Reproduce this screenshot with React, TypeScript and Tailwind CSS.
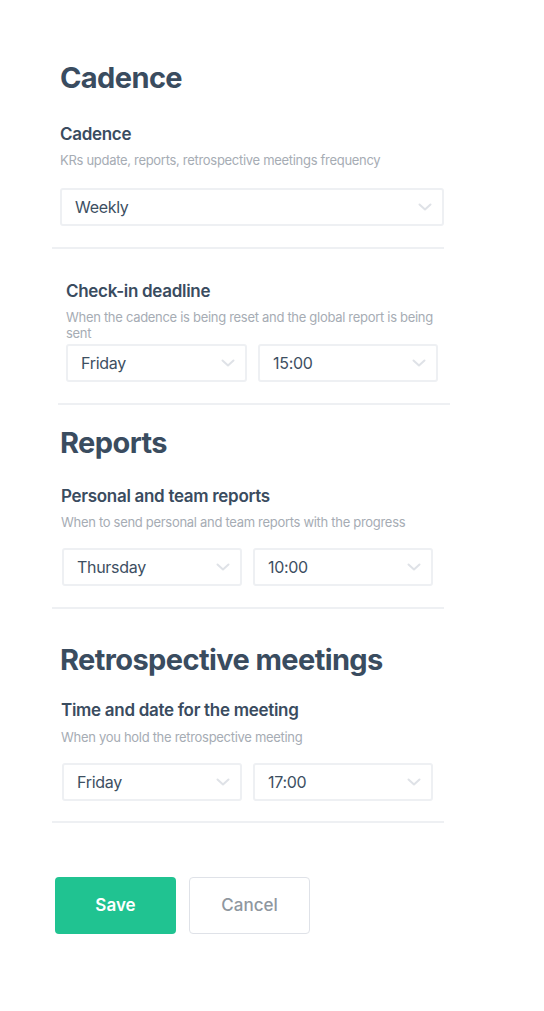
import React from 'react';

const Chevron = () => (
  <svg width="14" height="8" viewBox="0 0 14 8" fill="none" className="shrink-0">
    <path d="M1.5 1.5L7 6.5L12.5 1.5" stroke="#dfe2e7" strokeWidth="2" strokeLinecap="round" strokeLinejoin="round" />
  </svg>
);

const Select = ({ value, className = '' }: { value: string; className?: string }) => (
  <div
    className={`h-[38px] border-2 border-[#eef0f3] rounded-[3px] bg-white flex items-center justify-between pl-[13px] pr-[10px] ${className}`}
  >
    <span className="text-[16px] text-[#3d4f62] leading-none tracking-[-0.3px]">{value}</span>
    <Chevron />
  </div>
);

const Divider = ({ className = '' }: { className?: string }) => (
  <div className={`h-[2px] bg-[#eef0f3] ${className}`} />
);

const Label = ({ children }: { children: React.ReactNode }) => (
  <div className="text-[17px] leading-[24px] font-semibold text-[#3a4c5f] tracking-[-0.3px]">{children}</div>
);

const Hint = ({ children }: { children: React.ReactNode }) => (
  <div className="text-[13px] leading-[16px] text-[#a6acb4] tracking-[-0.3px]">{children}</div>
);

const Heading = ({ children }: { children: React.ReactNode }) => (
  <h2 className="text-[29px] leading-[36px] font-bold text-[#3a4c5f] tracking-[-0.6px]">{children}</h2>
);

export default function App() {
  return (
    <div
      className="w-[544px] min-h-[1011px] bg-white"
      style={{ fontFamily: 'Inter, "Noto Sans", sans-serif' }}
    >
      <div className="pt-[60px] pl-[52px] w-[444px]">
        {/* Cadence */}
        <div className="pl-[8px]">
          <Heading>Cadence</Heading>
          <div className="mt-[26px]">
            <Label>Cadence</Label>
          </div>
          <div className="mt-[6px]">
            <Hint>KRs update, reports, retrospective meetings frequency</Hint>
          </div>
          <Select value="Weekly" className="mt-[20px]" />
        </div>
        <Divider className="mt-[21px]" />

        {/* Check-in deadline */}
        <div className="ml-[6px] w-[392px]">
          <div className="pl-[8px] pr-[12px] pt-[30px]">
            <Label>Check-in deadline</Label>
            <div className="mt-[6px]">
              <Hint>When the cadence is being reset and the global report is being sent</Hint>
            </div>
            <div className="mt-[3px] flex gap-[11px]">
              <Select value="Friday" className="w-[181px]" />
              <Select value="15:00" className="w-[180px]" />
            </div>
          </div>
          <Divider className="mt-[21px]" />
        </div>

        {/* Reports */}
        <div className="pl-[8px] pt-[20px]">
          <Heading>Reports</Heading>
          <div className="mt-[23px] pl-[1px]">
            <Label>Personal and team reports</Label>
          </div>
          <div className="mt-[6px] pl-[1px]">
            <Hint>When to send personal and team reports with the progress</Hint>
          </div>
          <div className="mt-[18px] pl-[2px] flex gap-[11px]">
            <Select value="Thursday" className="w-[180px]" />
            <Select value="10:00" className="w-[180px]" />
          </div>
        </div>
        <Divider className="mt-[21px]" />

        {/* Retrospective meetings */}
        <div className="pl-[8px] pt-[33px]">
          <Heading>Retrospective meetings</Heading>
          <div className="mt-[20px] pl-[1px]">
            <Label>Time and date for the meeting</Label>
          </div>
          <div className="mt-[7px] pl-[1px]">
            <Hint>When you hold the retrospective meeting</Hint>
          </div>
          <div className="mt-[18px] pl-[2px] flex gap-[11px]">
            <Select value="Friday" className="w-[180px]" />
            <Select value="17:00" className="w-[180px]" />
          </div>
        </div>
        <Divider className="mt-[20px]" />

        {/* Actions */}
        <div className="mt-[54px] pl-[3px] flex gap-[13px]">
          <button className="w-[121px] h-[57px] rounded-[4px] bg-[#20c391] text-white text-[17px] font-semibold">
            Save
          </button>
          <button className="w-[121px] h-[57px] rounded-[4px] border border-[#dfe2e8] bg-white text-[#8f979f] text-[17px] font-medium">
            Cancel
          </button>
        </div>
      </div>
    </div>
  );
}
